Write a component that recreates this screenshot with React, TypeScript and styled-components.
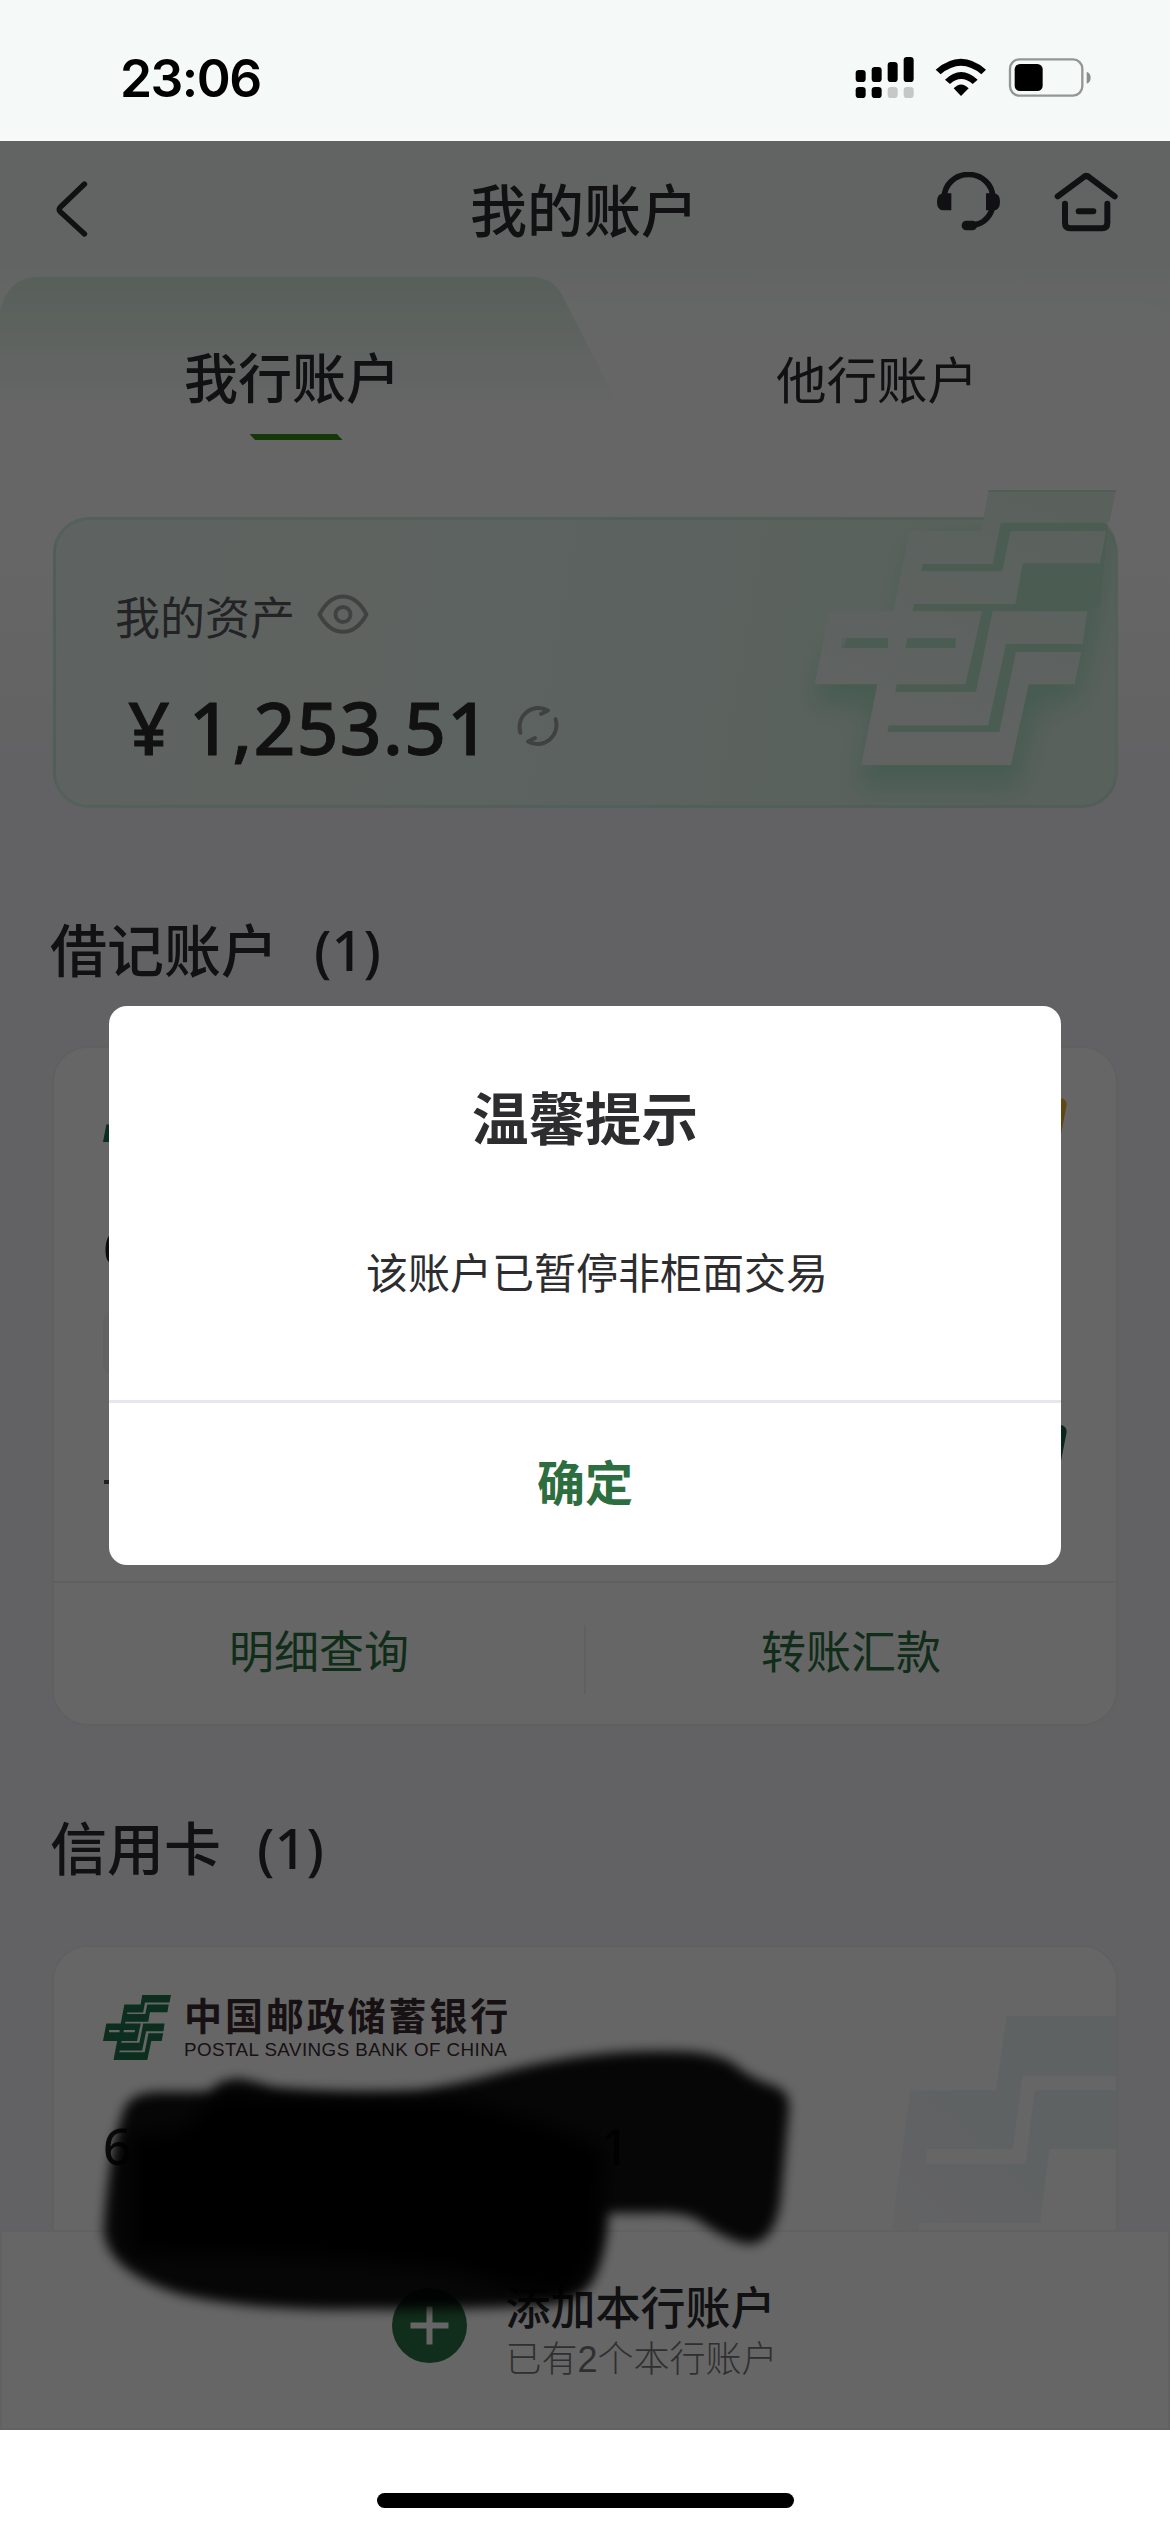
import React from 'react';
import styled, { createGlobalStyle } from 'styled-components';

const Global = createGlobalStyle`
  * { box-sizing: border-box; }
  body { margin: 0; background: #fff; }
`;

const cjk = '"Noto Sans CJK SC", "Noto Sans", sans-serif';

const Phone = styled.div`
  position: relative;
  display: flex;
  flex-direction: column;
  width: 1170px;
  height: 2532px;
  overflow: hidden;
  background: #fff;
  color: #2b2b30;
  font-family: ${cjk};
`;

const StatusBar = styled.header`
  display: flex;
  justify-content: space-between;
  height: 141px;
  flex: none;
  padding: 0 77px 0 120px;
  background: #f5faf9;
`;

const Clock = styled.div`
  margin-top: 46px;
  height: 64px;
  font: 600 51.5px/64px Inter, sans-serif;
  letter-spacing: -1.5px;
  color: #000;
`;

const StatusIcons = styled.div`
  display: flex;
  padding-top: 55px;
  svg { display: block; }
`;

const Screen = styled.main`
  position: relative;
  display: flex;
  flex-direction: column;
  height: 2289px;
  flex: none;
  overflow: hidden;
  background: linear-gradient(180deg, #f4f9f7 0, #f4f9f7 110px, #ffffff 190px, #ffffff 400px, #f5f5fa 640px, #f5f5fa 100%);
`;

const NavBar = styled.nav`
  display: grid;
  grid-template-columns: 1fr auto 1fr;
  height: 137px;
  flex: none;
  padding: 0 51px 0 54px;
`;

const NavTitle = styled.h1`
  margin: 26px 5px 0 0;
  font-size: 57px;
  line-height: 80px;
  font-weight: 500;
`;

const BackButton = styled.div`
  padding-top: 39px;
  svg { display: block; }
`;

const NavActions = styled.div`
  display: flex;
  justify-content: flex-end;
  gap: 53px;
  padding-top: 31px;
  svg { display: block; }
`;

const Tabs = styled.div`
  position: relative;
  display: grid;
  grid-template-columns: 1fr 1fr;
  height: 239px;
  flex: none;
`;

const TabShape = styled.svg`
  position: absolute;
  left: 0;
  top: -1px;
`;

const Tab = styled.div<{ $active?: boolean }>`
  position: relative;
  display: flex;
  flex-direction: column;
  align-items: center;
  padding-top: ${p => (p.$active ? 60 : 61)}px;
  padding-right: ${p => (p.$active ? 1 : 1)}px;
  font-size: ${p => (p.$active ? 54 : 50.5)}px;
  line-height: 76px;
  font-weight: ${p => (p.$active ? 500 : 400)};
`;

const TabMark = styled.div`
  margin: 20px 0 0 8px;
  width: 93px;
  height: 6px;
  background: #378a1a;
  clip-path: polygon(0 0, 94% 0, 100% 100%, 6% 100%);
`;

const AssetCard = styled.section`
  position: relative;
  display: flex;
  flex-direction: column;
  width: 1065px;
  height: 291px;
  flex: none;
  margin: 0 0 0 53px;
  padding: 64px 0 0 59px;
  border: 3px solid rgba(160, 222, 192, 0.32);
  border-radius: 36px;
  background: linear-gradient(100deg, #ecf8f2 0%, #e9f7f1 40%, #e3f5ec 65%, #def2e7 100%);
`;

const AssetEmblem = styled.svg`
  position: absolute;
  left: 704px;
  top: -60px;
`;

const AssetLabel = styled.div`
  display: flex;
  align-items: center;
  gap: 22px;
  height: 64px;
  font-size: 45px;
  line-height: 64px;
  color: #59595f;
  svg { margin-top: -2px; }
`;

const AssetAmount = styled.div`
  display: flex;
  align-items: center;
  height: 80px;
  margin-top: 39px;
  padding-left: 13px;
  font-family: "Noto Sans", "Noto Sans CJK SC", sans-serif;
  font-size: 73px;
  line-height: 80px;
  font-weight: 500;
  -webkit-text-stroke: 0.9px #2b2b2b;
  color: #2b2b2b;
  svg { margin: -2px 0 0 25px; }
`;

const Yen = styled.span`
  width: 61px;
`;

const Digits = styled.span`
  letter-spacing: 1.4px;
`;

const SectionTitle = styled.h2<{ $top: number }>`
  display: flex;
  margin: ${p => p.$top}px 0 0 50px;
  flex: none;
  font-size: 57px;
  line-height: 80px;
  height: 80px;
  font-weight: 500;
`;

const Count = styled.span`
  margin: 2px 0 0 36px;
  font-family: "Noto Sans", sans-serif;
  font-size: 56px;
  font-weight: 500;
`;

const AccountCard = styled.section<{ $height: number; $top: number }>`
  position: relative;
  display: flex;
  flex-direction: column;
  width: 1066px;
  height: ${p => p.$height}px;
  flex: none;
  margin: ${p => p.$top}px 0 0 52px;
  border: 2px solid #efeff1;
  border-radius: 36px;
  background: #fff;
  overflow: hidden;
`;

const CardBody = styled.div`
  display: flex;
  flex-direction: column;
  flex: 1;
  padding: 48px 48px 0 49px;
`;

const BankBrand = styled.div`
  display: flex;
  gap: 13px;
  height: 66px;
  svg { display: block; flex: none; }
`;

const BankNames = styled.div`
  display: flex;
  flex-direction: column;
  color: #3e2b30;
`;

const BankName = styled.div`
  margin-top: -5px;
  height: 49px;
  font-size: 38px;
  line-height: 47px;
  font-weight: 700;
  letter-spacing: 2.9px;
  white-space: nowrap;
`;

const BankNameEn = styled.div`
  height: 22px;
  font: 400 18.8px/22px "Liberation Sans", sans-serif;
  letter-spacing: 0.45px;
  white-space: nowrap;
`;

const CardNumber = styled.div`
  display: flex;
  justify-content: space-between;
  width: 526px;
  margin-top: 49px;
  font: 500 50px/72px "Noto Sans", sans-serif;
  color: #202020;
`;

const Chip = styled.div`
  width: 180px;
  height: 64px;
  margin-top: 28px;
  border-radius: 10px;
  background: #f6f6f6;
`;

const Dash = styled.div`
  width: 30px;
  height: 4px;
  margin: 105px 0 0 1px;
  background: #505060;
`;

const Ribbon = styled.div<{ $y: number; $color: string }>`
  position: absolute;
  right: 48px;
  top: ${p => p.$y}px;
  width: 60px;
  height: 52px;
  border-radius: 8px;
  background: ${p => p.$color};
  transform: skewX(-11deg);
  transform-origin: 100% 0;
`;

const CardActions = styled.div`
  display: grid;
  grid-template-columns: 1fr 2px 1fr;
  height: 143px;
  flex: none;
  border-top: 2px solid #f1f1f1;
`;

const CardAction = styled.div`
  padding-top: 35px;
  text-align: center;
  font-size: 45px;
  line-height: 64px;
  color: #2a7040;
`;

const Separator = styled.div`
  height: 69px;
  margin-top: 42px;
  background: #f0f0f0;
`;

const Watermark = styled.svg`
  position: absolute;
  right: 0;
  top: 68px;
`;

const AddBar = styled.footer`
  position: absolute;
  left: 0;
  right: 0;
  bottom: 0;
  height: 200px;
  display: flex;
  justify-content: center;
  gap: 38px;
  border: 2px solid #f2f2f2;
  background: #fff;
`;

const AddIcon = styled.svg`
  margin-top: 56px;
`;

const AddText = styled.div`
  display: flex;
  flex-direction: column;
  padding-top: 50px;
  font-family: "Liberation Sans", "Noto Sans CJK SC", sans-serif;
`;

const AddTitle = styled.div`
  font-size: 45px;
  line-height: 56px;
  font-weight: 500;
`;

const AddHint = styled.div`
  font-size: 36px;
  line-height: 43px;
  font-weight: 300;
  color: #77777a;
`;

const Backdrop = styled.div`
  position: absolute;
  inset: 0;
  background: rgba(0, 0, 0, 0.6);
`;

const Dialog = styled.div`
  position: absolute;
  left: 109px;
  top: 865px;
  width: 952px;
  height: 559px;
  display: flex;
  flex-direction: column;
  border-radius: 18px;
  background: #fff;
  color: #2d2d30;
  text-align: center;
`;

const DialogTitle = styled.h3`
  margin: 69px 0 0;
  font-size: 56.5px;
  line-height: 80px;
  font-weight: 700;
`;

const DialogText = styled.p`
  margin: 86px 0 0 24px;
  font-size: 42px;
  line-height: 60px;
`;

const DialogButton = styled.div`
  margin-top: auto;
  height: 165px;
  padding-top: 42px;
  border-top: 3px solid #e6e6ec;
  font-size: 48px;
  line-height: 70px;
  font-weight: 700;
  color: #2d6e40;
`;

const HomeArea = styled.div`
  display: flex;
  justify-content: center;
  flex: 1;
  padding-top: 63px;
`;

const HomeIndicator = styled.div`
  width: 417px;
  height: 15px;
  border-radius: 8px;
  background: #000;
`;

const Scribble = styled.svg`
  position: absolute;
  left: 60px;
  top: 2000px;
`;

const emblemPath =
  'M685 92H1068L1048 188H722L698 312H488L484 334H727L752 213H1038L1020 310H788L766 432H462L457 454H666L616 673H410L406 696H648L698 454H982L968 552H738L684 796H386L382 816H718L768 576H964L944 673H806L753 915H304L352 673H164L208 454H400L448 213H664ZM246 534L243 564H384V534ZM442 534L436 564H587V534Z';

const BrandMark = () => (
  <svg width="68" height="65" viewBox="164 92 904 823" preserveAspectRatio="none">
    <path d={emblemPath} fill="#1c744c" fillRule="evenodd" />
  </svg>
);

export default function App() {
  return (
    <Phone>
      <Global />
      <StatusBar>
        <Clock>23:06</Clock>
        <StatusIcons>
          <svg width="240" height="45" viewBox="100 75 720 135">
            <rect x="108" y="120" width="30" height="36" rx="10" />
            <rect x="156" y="111" width="30" height="45" rx="10" />
            <rect x="204" y="96" width="30" height="60" rx="10" />
            <rect x="252" y="81" width="30" height="75" rx="10" />
            <rect x="108" y="171" width="30" height="33" rx="10" />
            <rect x="156" y="171" width="30" height="33" rx="10" />
            <rect x="204" y="171" width="30" height="33" rx="10" fill="#c4c8c7" />
            <rect x="252" y="171" width="30" height="33" rx="10" fill="#c4c8c7" />
            <path d="M348 119Q424 54 499 119L485 133Q424 82 363 133Z" />
            <path d="M376 149Q424 103 474 149L459 162Q424 132 391 162Z" />
            <path d="M402 175Q424 152 447 175L424 198Z" />
            <rect x="571" y="88" width="217" height="109" rx="28" fill="none" stroke="#939695" strokeWidth="7" />
            <rect x="585" y="102" width="84" height="81" rx="16" />
            <path d="M801 125Q813 130 813 143T801 161Z" fill="#8b8e8d" />
          </svg>
        </StatusIcons>
      </StatusBar>

      <Screen>
        <NavBar>
          <BackButton>
            <svg width="36" height="60" viewBox="0 0 36 60" fill="none" stroke="#2b2b30" strokeWidth="5.4" strokeLinecap="round" strokeLinejoin="round">
              <path d="M30.500 4L6 27.500Q4.500 29.500 6 31.500L30.500 54" />
            </svg>
          </BackButton>
          <NavTitle>我的账户</NavTitle>
          <NavActions>
            <svg width="65" height="60" viewBox="345 425 195 180" fill="none" stroke="#2b2b30">
              <path d="M370 500A72 67 0 0 1 515 500M514 535Q498 583 448 585" strokeWidth="17" />
              <path d="M391 489V540H368Q348 540 348 514Q348 489 370 489ZM495 489V540H517Q537 540 537 514Q537 489 516 489Z" fill="#2b2b30" stroke="none" />
              <rect x="422" y="571" width="46" height="29" rx="14" fill="#2b2b30" stroke="none" />
            </svg>
            <svg width="65" height="60" viewBox="700 425 195 180" fill="none" stroke="#2b2b30" strokeWidth="18" strokeLinecap="round" strokeLinejoin="round">
              <path d="M711 498L788 441Q797 433 806 441L882 498M733 520V578Q733 594 749 594H844Q860 594 860 578V520M774 543H818" />
            </svg>
          </NavActions>
        </NavBar>

        <Tabs>
          <TabShape width="1170" height="140" viewBox="0 0 1170 140">
            <defs>
              <linearGradient id="tabOn" x1="0" y1="0" x2="0" y2="1">
                <stop offset="0" stopColor="#dcf0e5" />
                <stop offset="0.35" stopColor="#e7f5ed" />
                <stop offset="1" stopColor="#ffffff" />
              </linearGradient>
              <linearGradient id="tabOff" x1="0" y1="0" x2="0" y2="1">
                <stop offset="0" stopColor="#fdfffe" />
                <stop offset="1" stopColor="#ffffff" />
              </linearGradient>
            </defs>
            <path d="M530 24H1130Q1164 24 1170 58V140H530Z" fill="url(#tabOff)" />
            <path d="M0 34Q8 0 38 0H530Q553 0 562 18L622 135H0Z" fill="url(#tabOn)" />
          </TabShape>
          <Tab $active>
            我行账户
            <TabMark />
          </Tab>
          <Tab>他行账户</Tab>
        </Tabs>

        <AssetCard>
          <AssetEmblem width="410" height="400" viewBox="0 0 1230 1200">
            <defs>
              <clipPath id="cardClip">
                <path d="M0 170H970Q1070 170 1070 270V943Q1070 1043 970 1043H0Z" />
              </clipPath>
              <filter id="soft" x="-30%" y="-30%" width="160%" height="160%">
                <feGaussianBlur stdDeviation="38" />
              </filter>
              <linearGradient id="face" x1="0.7" y1="0" x2="0.3" y2="1">
                <stop offset="0" stopColor="#e1f3e9" />
                <stop offset="1" stopColor="#f2f8f5" />
              </linearGradient>
            </defs>
            <g clipPath="url(#cardClip)">
              <path d="M460 250L1060 190L1030 430L960 720L830 760L780 990H290L330 740H150L200 560H390Z" fill="#b4e6cc" filter="url(#soft)" />
              <path d="M700 180H1045L1020 440H800L770 560H960L940 660H800L750 900H320L370 640H240L260 530H430L480 300H690Z" fill="#bbe9d0" />
            </g>
            <path d={emblemPath} fill="url(#face)" fillRule="evenodd" />
            <path d="M685 93H1068" stroke="#c5ded2" strokeWidth="4" />
          </AssetEmblem>
          <AssetLabel>
            我的资产
            <svg width="52" height="42" viewBox="0 0 52 42" fill="none" stroke="#a0a3a2" strokeWidth="3.9">
              <path d="M2.500 20.500C15 -3.500 37 -3.500 49.500 20.500C37 43.500 15 43.500 2.500 20.500Z" strokeLinejoin="round" />
              <circle cx="26" cy="20.500" r="7.500" />
            </svg>
          </AssetLabel>
          <AssetAmount>
            <Yen>¥</Yen>
            <Digits>1,253.51</Digits>
            <svg width="44" height="44" viewBox="0 0 44 44" fill="none" stroke="#a0a3a2" strokeWidth="3.900" strokeLinecap="round" strokeLinejoin="round">
              <path d="M4.500 29A19 19 0 0 1 32 6.500L25 10M39.500 15A19 19 0 0 1 12 37.500L19 34" />
            </svg>
          </AssetAmount>
        </AssetCard>

        <SectionTitle $top={99}>借记账户<Count>(1)</Count></SectionTitle>
        <AccountCard $top={59} $height={680}>
          <Ribbon $y={50} $color="linear-gradient(#f0b830, #e0a030)" />
          <Ribbon $y={377} $color="#14604a" />
          <CardBody>
            <BankBrand>
              <BrandMark />
            </BankBrand>
            <CardNumber>
              <span>6</span>
            </CardNumber>
            <Chip />
            <Dash />
          </CardBody>
          <CardActions>
            <CardAction>明细查询</CardAction>
            <Separator />
            <CardAction>转账汇款</CardAction>
          </CardActions>
        </AccountCard>

        <SectionTitle $top={79}>信用卡<Count>(1)</Count></SectionTitle>
        <AccountCard $top={60} $height={420}>
          <Watermark width="226" height="216" viewBox="94 226 678 648">
            <defs>
              <linearGradient id="mark" x1="0" y1="1" x2="0.7" y2="0.3">
                <stop offset="0" stopColor="#f8f9fa" />
                <stop offset="0.35" stopColor="#f3f5f9" />
                <stop offset="0.7" stopColor="#ecf6f7" />
              </linearGradient>
            </defs>
            <path d="M444 228H772V408H492L462 628H205L200 672H500L528 452H772V628H572L545 850H180V874H98L155 452H412Z" fill="url(#mark)" />
          </Watermark>
          <CardBody>
            <BankBrand>
              <BrandMark />
              <BankNames>
                <BankName>中国邮政储蓄银行</BankName>
                <BankNameEn>POSTAL SAVINGS BANK OF CHINA</BankNameEn>
              </BankNames>
            </BankBrand>
            <CardNumber>
              <span>6</span>
              <span>1</span>
            </CardNumber>
          </CardBody>
        </AccountCard>

        <AddBar>
          <AddIcon width="75" height="75" viewBox="0 0 75 75">
            <circle cx="37.500" cy="37.500" r="37.500" fill="#2b7045" />
            <path d="M18.500 37.500H56.500M37.500 18.500V56.500" stroke="#fff" strokeWidth="6" />
          </AddIcon>
          <AddText>
            <AddTitle>添加本行账户</AddTitle>
            <AddHint>已有2个本行账户</AddHint>
          </AddText>
        </AddBar>

        <Backdrop />
        <Dialog>
          <DialogTitle>温馨提示</DialogTitle>
          <DialogText>该账户已暂停非柜面交易</DialogText>
          <DialogButton>确定</DialogButton>
        </Dialog>
      </Screen>

      <HomeArea>
        <HomeIndicator />
      </HomeArea>

      <Scribble width="780" height="340" viewBox="60 2000 780 340">
        <defs>
          <filter id="brush" x="-5%" y="-10%" width="110%" height="120%">
            <feGaussianBlur stdDeviation="6" />
          </filter>
          <filter id="brushCore" x="-10%" y="-10%" width="120%" height="120%">
            <feGaussianBlur stdDeviation="9" />
          </filter>
        </defs>
        <g filter="url(#brush)">
          <path
            transform="translate(90 2030) scale(0.4592 0.3333)"
            opacity="0.94"
            d="M75 235Q90 188 150 186H266Q270 155 320 146Q345 148 400 175Q550 198 710 184Q800 165 900 126Q1080 60 1250 64Q1350 60 1400 100Q1435 145 1490 168Q1525 185 1522 240L1504 510Q1490 640 1435 642Q1390 635 1325 570Q1290 546 1230 549H1126Q1124 650 1102 730Q1080 820 960 828Q800 840 600 838Q330 842 190 790Q35 720 30 600Q38 420 60 300Z"
          />
        </g>
        <g filter="url(#brushCore)">
          <path
            transform="translate(90 2030) scale(0.4592 0.3333)"
            d="M275 195Q400 205 800 210Q1000 270 1120 360L1110 600Q1090 740 1040 790Q900 780 800 720Q500 670 90 670L90 320L200 300Z"
          />
        </g>
      </Scribble>
    </Phone>
  );
}
